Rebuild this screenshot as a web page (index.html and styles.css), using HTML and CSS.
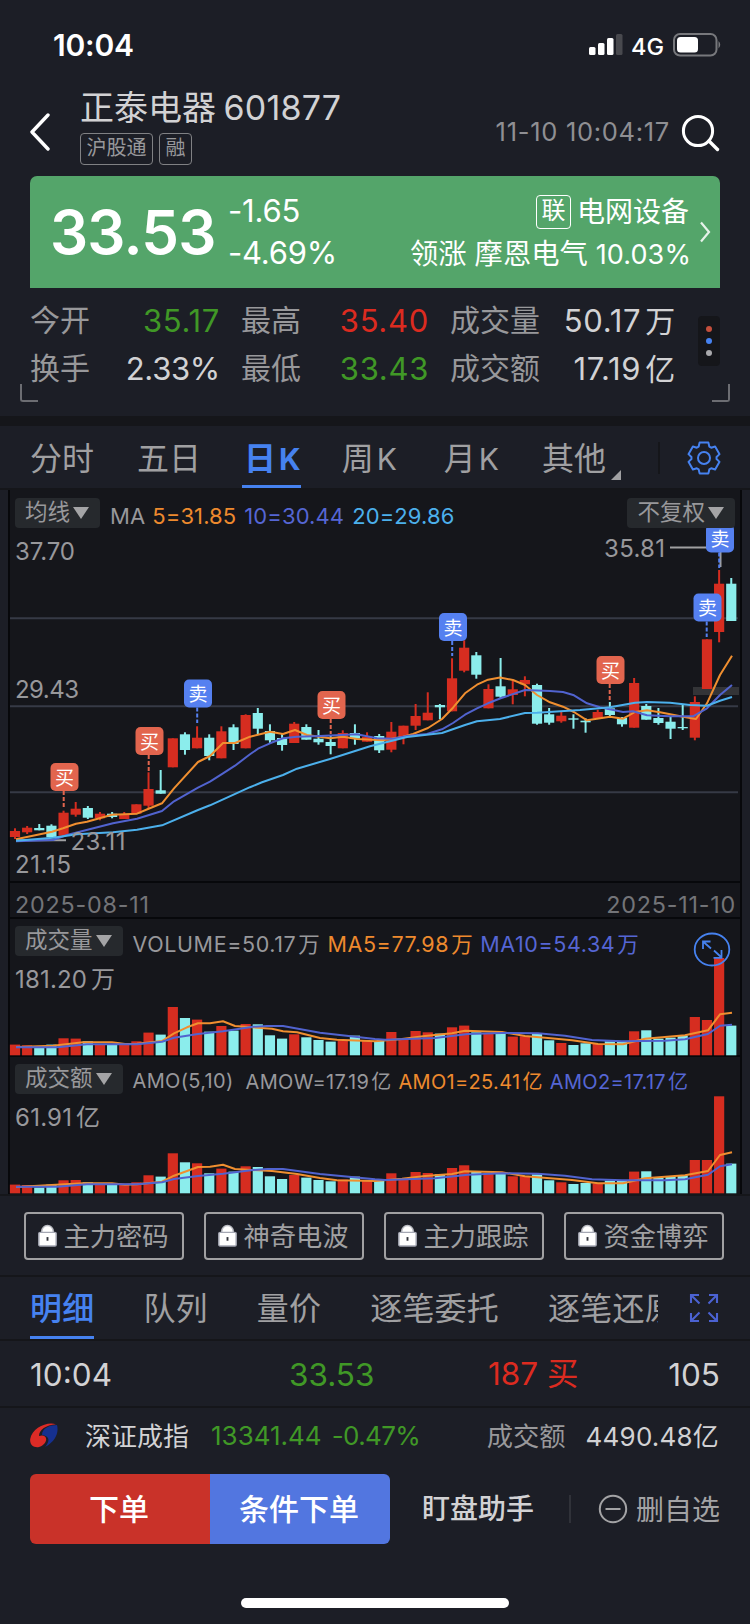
FILE: index.html
```html
<!DOCTYPE html>
<html lang="zh-CN">
<head>
  <meta charset="UTF-8">
  <title>正泰电器 601877</title>
  <meta name="viewport" content="width=device-width, initial-scale=1.0">
  <link rel="stylesheet" href="styles.css">
</head>
<body>
  <div class="status-bar">
    <span class="clock">10:04</span>
    <div class="status-right">
      <svg class="signal" width="34" height="22" viewBox="0 0 34 22">
        <rect x="0" y="13" width="6.5" height="8" rx="1.5" fill="#fff"/>
        <rect x="9" y="9" width="6.5" height="12" rx="1.5" fill="#fff"/>
        <rect x="18" y="4" width="6.5" height="17" rx="1.5" fill="#fff"/>
        <rect x="27" y="0" width="6.5" height="21" rx="1.5" fill="#48494e"/>
      </svg>
      <span class="network">4G</span>
      <svg class="battery" width="49" height="24" viewBox="0 0 49 24">
        <rect x="1" y="1" width="42.5" height="21.5" rx="6" fill="none" stroke="#77787c" stroke-width="2"/>
        <rect x="4" y="4" width="21" height="15.5" rx="3.5" fill="#fff"/>
        <path d="M45.5 8 q3.5 3.7 0 7.5z" fill="#77787c"/>
      </svg>
    </div>
  </div>

  <header class="stock-header">
    <svg class="back" width="22" height="38" viewBox="0 0 22 38"><path d="M19 2 L3 19 L19 36" fill="none" stroke="#fff" stroke-width="3.4" stroke-linecap="round" stroke-linejoin="round"/></svg>
    <div class="stock-name">
      <h1>正泰电器 <span>601877</span></h1>
      <div class="tags"><span>沪股通</span><span>融</span></div>
    </div>
    <span class="quote-time">11-10 10:04:17</span>
    <svg class="search" width="40" height="38" viewBox="0 0 40 38"><circle cx="17" cy="17" r="14.6" fill="none" stroke="#fff" stroke-width="3"/><path d="M28 27 L36.5 35.5" stroke="#fff" stroke-width="3.4" stroke-linecap="round"/></svg>
  </header>

  <section class="price-card">
    <strong class="price">33.53</strong>
    <div class="change"><span>-1.65</span><span>-4.69%</span></div>
    <div class="sector">
      <div class="sector-name"><i>联</i>电网设备</div>
      <div>领涨 摩恩电气 <span>10.03%</span></div>
    </div>
    <svg width="12" height="24" viewBox="0 0 12 24"><path d="M2 2.5 L10 12 L2 21.5" fill="none" stroke="#fff" stroke-opacity=".85" stroke-width="2.2"/></svg>
  </section>

  <section class="stats">
    <div class="stats-grid">
      <span>今开</span><b class="green">35.17</b><span>最高</span><b class="red">35.40</b><span>成交量</span><b>50.17<em>万</em></b>
      <span>换手</span><b class="turnover">2.33%</b><span>最低</span><b class="green">33.43</b><span>成交额</span><b>17.19<em>亿</em></b>
    </div>
    <div class="dots"><i></i><i></i><i></i></div>
    <div class="corner left"></div>
    <div class="corner right"></div>
  </section>

  <nav class="period-tabs">
    <span>分时</span>
    <span class="five-day">五日</span>
    <span class="active">日<em>K</em></span>
    <span class="week">周<em>K</em></span>
    <span>月<em>K</em></span>
    <span class="more">其他</span>
    <div class="settings">
      <svg width="34" height="34" viewBox="-17 -17 34 34">
        <path id="gearPath" fill="none" stroke="#4682f0" stroke-width="2" stroke-linejoin="round"/>
        <circle r="6" fill="none" stroke="#4682f0" stroke-width="2"/>
      </svg>
    </div>
  </nav>

  <section class="charts">
    <div class="pane kline">
      <svg id="kline" width="734" height="392" viewBox="8 490 734 392"></svg>
      <div class="legend">
        <span class="chip">均线<i></i></span>
        <span>MA</span><span class="ma5">5=31.85</span><span class="ma10">10=30.44</span><span class="ma20">20=29.86</span>
        <span class="chip adjust">不复权<i></i></span>
      </div>
    </div>
    <div class="dates"><span>2025-08-11</span><span>2025-11-10</span></div>
    <div class="pane volume">
      <svg id="volume" width="734" height="138" viewBox="8 919 734 138"></svg>
      <div class="legend">
        <span class="chip">成交量<i></i></span>
        <span>VOLUME=50.17<em>万</em></span><span class="ma5">MA5=77.98<em>万</em></span><span class="ma10">MA10=54.34<em>万</em></span>
      </div>
    </div>
    <div class="pane amount">
      <svg id="amount" width="734" height="137" viewBox="8 1057 734 137"></svg>
      <div class="legend">
        <span class="chip">成交额<i></i></span>
        <span class="amo">AMO(5,10)</span><span>AMOW=17.19<em>亿</em></span><span class="ma5">AMO1=25.41<em>亿</em></span><span class="ma10">AMO2=17.17<em>亿</em></span>
      </div>
    </div>
  </section>

  <svg width="0" height="0" class="defs">
    <symbol id="lock" viewBox="0 0 18 22">
      <path d="M3.5 10 V7 a5.5 5.5 0 0 1 11 0 V10z" fill="#fff" stroke="#b9bbc2" stroke-width="1.4"/>
      <rect x="0.7" y="8" width="16.6" height="13" rx="1.2" fill="#fff" stroke="#a4a7b3" stroke-width="1.4"/>
      <path d="M9 12.5 V16" stroke="#33353c" stroke-width="1.8"/>
    </symbol>
  </svg>
  <div class="tools">
    <button><svg width="19" height="23"><use href="#lock"/></svg>主力密码</button>
    <button><svg width="19" height="23"><use href="#lock"/></svg>神奇电波</button>
    <button><svg width="19" height="23"><use href="#lock"/></svg>主力跟踪</button>
    <button><svg width="19" height="23"><use href="#lock"/></svg>资金博弈</button>
  </div>

  <nav class="detail-tabs">
    <div class="detail-scroll">
      <span class="active">明细</span>
      <span>队列</span>
      <span>量价</span>
      <span>逐笔委托</span>
      <span>逐笔还原</span>
    </div>
    <svg width="30" height="30" viewBox="0 0 30 30" fill="none" stroke="#4b62d2" stroke-width="2.1">
      <path d="M10 2 H2 V10 M2 2 L10.500 10.500 M20 2 H28 V10 M28 2 L19.500 10.500 M10 28 H2 V20 M2 28 L10.500 19.500 M20 28 H28 V20 M28 28 L19.500 19.500"/>
    </svg>
  </nav>

  <div class="trade-row">
    <span>10:04</span><span class="green">33.53</span><span class="red">187 买</span><span>105</span>
  </div>

  <div class="index-row">
    <svg width="28" height="25" viewBox="0 0 28 25">
      <path d="M27 2 C29 9 26 18 15 24 C20 18 20 13 12 12 C12 5 20 2 27 2z" fill="#16308f"/>
      <path d="M26 1.200 C17 -2 2 5 0.200 16 C-0.500 22 4 25 9 24 C15 22.500 18 16 15 13.500 C13 12 11 12.500 9 13 C9 7 16 1.800 26 1.200z" fill="#dc2b26"/>
    </svg>
    <span class="index-name">深证成指</span>
    <span class="index-price green">13341.44</span>
    <span class="index-change green">-0.47%</span>
    <span class="index-label">成交额</span>
    <span class="index-amount">4490.48<em>亿</em></span>
  </div>

  <footer class="actions">
    <button class="order">下单</button>
    <button class="cond-order">条件下单</button>
    <span class="watch">盯盘助手</span>
    <span class="remove"><svg width="30" height="30" viewBox="0 0 30 30" fill="none" stroke="#a3a3a5" stroke-width="2"><circle cx="15" cy="15" r="13.200"/><path d="M7.500 15 H22.500"/></svg><span>删自选</span></span>
  </footer>
  <div class="home-bar"></div>

  <script src="chart.js"></script>
</body>
</html>
```

FILE: styles.css
```css
* {
  box-sizing: border-box;
}
body {
  width: 750px;
  height: 1624px;
  margin: 0;
  overflow: hidden;
  font-family: Inter, 'Noto Sans CJK SC', sans-serif;
  color: #d2d2d4;
  background: #1c1e26;
  display: flex;
  flex-direction: column;
}
svg {
  display: block;
  flex: none;
}
em, i {
  font-style: normal;
}
span, button, b, strong {
  white-space: nowrap;
}
button {
  font-family: inherit;
  padding: 0;
}
.green {
  color: #409826;
}
.red {
  color: #dc2b20;
}
.defs {
  position: absolute;
}

/* status bar */
.status-bar {
  height: 90px;
  padding: 0 28px 0 53px;
  display: flex;
  align-items: center;
  justify-content: space-between;
  color: #fff;
}
.clock {
  font-size: 30px;
  font-weight: 600;
  letter-spacing: -0.2px;
}
.status-right {
  display: flex;
  align-items: center;
}
.network {
  font-size: 23.5px;
  font-weight: 500;
  margin: 2px 9px 0 8px;
}

/* header */
.stock-header {
  height: 86px;
  padding: 0 30px 0 29px;
  display: flex;
  align-items: center;
}
.back {
  margin: -2px 29px 0 0;
}
.stock-name {
  flex: 1;
  padding-bottom: 11px;
}
h1 {
  margin: 0;
  font-size: 34px;
  font-weight: 400;
  line-height: 36px;
  letter-spacing: 0;
}
h1 span {
  letter-spacing: 0.2px;
  margin-left: -2px;
}
.tags {
  display: flex;
  gap: 6px;
  margin-top: 7px;
  color: #98989b;
  font-size: 20px;
}
.tags span {
  height: 32px;
  line-height: 29px;
  padding: 0 5.500px;
  border: 1.5px solid #808184;
  border-radius: 4px;
}
.quote-time {
  margin-top: -3px;
  color: #8f8f93;
  font-size: 25.5px;
  letter-spacing: 0.7px;
}
.search {
  margin-left: 11px;
  margin-right: -1px;
  margin-top: -1px;
}

/* price */
.price-card {
  height: 112px;
  margin: 0 30px;
  padding: 0 9px 0 20px;
  display: flex;
  align-items: center;
  border-radius: 7px 7px 0 0;
  background: #54a56a;
  color: #fff;
}
.price {
  width: 178px;
  font-size: 60px;
  font-weight: 600;
  letter-spacing: -0.8px;
}
.change {
  display: flex;
  flex-direction: column;
  font-size: 31px;
  line-height: 42px;
  letter-spacing: -0.2px;
}
.sector {
  flex: 1;
  text-align: right;
  font-size: 28.300px;
  line-height: 42px;
  margin-right: 8px;
  padding-top: 2px;
}
.sector-name {
  display: flex;
  justify-content: flex-end;
  align-items: center;
  gap: 6px;
  font-size: 28px;
  margin-right: 2px;
}
.sector-name i {
  width: 35px;
  height: 34px;
  border: 1.5px solid #fff;
  border-radius: 4px;
  font-size: 24px;
  line-height: 30px;
  text-align: center;
}
.sector span {
  font-size: 27px;
  letter-spacing: 0.1px;
}

/* stats */
.stats {
  position: relative;
  height: 128px;
  padding: 9px 30px 0;
  display: flex;
  justify-content: space-between;
}
.stats-grid {
  display: grid;
  grid-template-columns: 80px 110px 110px 99px 120px 127px;
  grid-auto-rows: 48px;
  align-items: center;
  font-size: 30px;
}
.stats-grid span {
  color: #98989b;
  line-height: 42px;
  padding-bottom: 2px;
}
.stats-grid b {
  font-weight: 400;
  font-size: 31px;
  line-height: 42px;
  letter-spacing: 0.7px;
  text-align: right;
}
.stats-grid .turnover {
  letter-spacing: -0.3px;
}
.stats-grid span:nth-child(6n + 3), .stats-grid span:nth-child(6n + 5) {
  padding-left: 21px;
}
.stats-grid em {
  margin-left: 4px;
  font-size: 30px;
}
.dots {
  width: 22px;
  height: 50px;
  margin-top: 19px;
  border-radius: 4px;
  background: #15161a;
  display: flex;
  flex-direction: column;
  align-items: center;
  justify-content: center;
  gap: 6px;
}
.dots i {
  width: 6px;
  height: 6px;
  border-radius: 50%;
  background: #c44f3c;
}
.dots i:nth-child(2) {
  background: #4682f0;
}
.dots i:nth-child(3) {
  background: #a9a9ac;
}
.corner {
  position: absolute;
  bottom: 14px;
  width: 18px;
  height: 18px;
  border-bottom: 2px solid #6c6d72;
}
.corner.left {
  left: 20px;
  border-left: 2px solid #6c6d72;
  border-bottom-left-radius: 3px;
}
.corner.right {
  right: 20px;
  border-right: 2px solid #6c6d72;
  border-bottom-right-radius: 3px;
}

/* period tabs */
.period-tabs {
  height: 74px;
  border-top: 10px solid #15161a;
  border-bottom: 2px solid #15161a;
  padding: 0 29px 0 30px;
  display: flex;
  font-size: 32px;
  line-height: 65px;
  color: #a0a0a2;
}
.period-tabs span {
  height: 62px;
  margin-right: 43px;
}
.period-tabs em {
  margin-left: 3px;
  font-size: 30px;
}
.period-tabs .five-day {
  margin-right: 41px;
}
.period-tabs .active {
  color: #4682f0;
  font-weight: 700;
  border-bottom: 3px solid #4682f0;
  padding-left: 2px;
  margin-right: 41px;
}
.period-tabs .week {
  margin-right: 47px;
}
.more {
  position: relative;
}
.more::after {
  content: "";
  position: absolute;
  left: 69px;
  top: 44px;
  border-left: 10px solid transparent;
  border-bottom: 10px solid #a0a0a2;
}
.settings {
  width: 63px;
  height: 32px;
  margin: 16px 0 0 auto;
  display: flex;
  align-items: center;
  justify-content: flex-end;
  border-left: 2px solid #15161a;
}

/* charts */
.charts {
  width: 734px;
  height: 704px;
  margin-left: 8px;
  background: #15161b;
  border-left: 2px solid #07080b;
  border-right: 2px solid #07080b;
}
.pane {
  position: relative;
  border-bottom: 2px solid #07080b;
}
.pane > svg {
  position: absolute;
  left: -2px;
  top: 0;
}
.kline {
  height: 393px;
}
.volume {
  height: 138px;
}
.amount {
  height: 137px;
  border-bottom: 0;
}
.legend {
  position: relative;
  display: flex;
  align-items: center;
  height: 30px;
  padding: 0 5px;
  font-size: 22px;
  color: #98989b;
}
.kline .legend {
  top: 8px;
  letter-spacing: 0.1px;
}
.volume .legend, .amount .legend {
  top: 7px;
}
.legend > span + span {
  padding-top: 3px;
  margin-left: 7px;
}
.legend .chip + span {
  margin-left: 10px;
}
.kline .legend > span {
  padding-top: 5px;
}
.kline .legend .ma10, .kline .legend .ma20 {
  margin-left: 8px;
}
.legend em {
  margin-left: 2px;
}
.legend .chip {
  height: 30px;
  line-height: 28px;
  padding: 0 11px 0 10px;
  border-radius: 4px;
  background: #26292d;
  font-size: 22.5px;
  letter-spacing: 0;
}
.kline .legend .chip {
  padding-top: 0;
}
.chip i {
  display: inline-block;
  margin-left: 3px;
  vertical-align: 1px;
  border: 8px solid transparent;
  border-top: 12px solid #a4a4a6;
  border-bottom: 0;
}
.legend .adjust {
  margin-left: auto;
}
.legend .ma5 {
  color: #ee8a2e;
}
.legend .ma10 {
  color: #5566d4;
}
.legend .ma20 {
  color: #4cb0ec;
}
.volume .legend {
  font-size: 21.5px;
  letter-spacing: 0.6px;
}
.amount .legend {
  font-size: 20px;
  letter-spacing: 0.32px;
}
.legend .amo {
  margin-right: 5px;
}
.dates {
  height: 36px;
  padding: 8px 4px 0 5px;
  display: flex;
  align-items: center;
  justify-content: space-between;
  border-bottom: 2px solid #07080b;
  color: #737478;
  font-size: 23.300px;
  letter-spacing: 0.8px;
}
svg text {
  font-family: Inter, 'Noto Sans CJK SC', sans-serif;
}

/* locked tools */
.tools {
  height: 83px;
  padding: 16px 26px 0 24px;
  display: flex;
  justify-content: space-between;
  border-top: 2px solid #15161a;
  border-bottom: 2px solid #15161a;
}
.tools button {
  width: 160px;
  height: 48px;
  padding: 0 2px 3px 1px;
  display: flex;
  align-items: center;
  justify-content: center;
  gap: 6px;
  border: 2px solid #a0a0a2;
  border-radius: 4px;
  background: none;
  color: #a0a0a2;
  font-size: 26.300px;
}
.tools svg {
  margin-top: 2px;
}

/* detail tabs */
.detail-tabs {
  height: 64px;
  padding: 0 31px 0 30px;
  display: flex;
  align-items: center;
  justify-content: space-between;
  border-bottom: 2px solid #15161a;
}
.detail-scroll {
  width: 628px;
  height: 62px;
  overflow: hidden;
  display: flex;
  gap: 49px;
  font-size: 32px;
  letter-spacing: 0.2px;
  line-height: 64px;
  color: #a0a0a2;
}
.detail-scroll .active {
  height: 62px;
  color: #4682f0;
  font-weight: 500;
  border-bottom: 3px solid #4682f0;
}

/* last trade */
.trade-row {
  height: 67px;
  padding: 2px 30px 0;
  display: grid;
  grid-template-columns: 259px 199px 148px 1fr;
  align-items: center;
  border-bottom: 2px solid #15161a;
  font-size: 31.500px;
}
.trade-row span {
  line-height: 44px;
}
.trade-row .red {
  padding-bottom: 1px;
}
.trade-row span:last-child {
  text-align: right;
}

/* index */
.index-row {
  height: 57px;
  padding: 0 31px 2px 30px;
  display: flex;
  align-items: center;
  font-size: 26px;
}
.index-name {
  margin: 0 22px 0 27px;
  padding-bottom: 2px;
}
.index-price {
  margin-right: 10px;
}
.index-change {
  letter-spacing: -0.6px;
}
.index-label {
  margin: 0 20px 0 auto;
  padding-bottom: 2px;
  font-size: 26.300px;
  color: #98989b;
}
.index-amount {
  padding-bottom: 2px;
  letter-spacing: 0.2px;
}

/* actions */
.actions {
  height: 70px;
  margin: 9px 30px 0;
  display: flex;
  align-items: center;
  font-size: 28px;
}
.actions button {
  width: 180px;
  height: 70px;
  border: 0;
  padding: 0 2px 5px 0;
  color: #fff;
  font-size: 30px;
  font-weight: 500;
}
.order {
  border-radius: 6px 0 0 6px;
  background: #c93229;
}
.cond-order {
  border-radius: 0 6px 6px 0;
  background: #5276e0;
}
.watch {
  width: 181px;
  padding-left: 32px;
  font-weight: 500;
  border-right: 2px solid #303239;
  line-height: 28px;
}
.remove {
  display: flex;
  align-items: center;
  margin-left: auto;
  gap: 8px;
  color: #a3a3a5;
}
.remove span {
  padding-bottom: 3px;
}
.home-bar {
  width: 268px;
  height: 10px;
  margin: 54px auto 0;
  border-radius: 5px;
  background: #fff;
}
```

FILE: chart.js
```javascript
const RED = '#d62d20';
const CYAN = '#8bedec';
const GREY = '#98989b';
const STEP = 12.14;
const X0 = 15;

// [up, body top, body bottom, wick top, wick bottom]
const candles = [
  [1,831,837,828.3,839], [1,827.7,832.3,826,834], [0,828,830.3,824,830.3], [0,825.7,837.3,824.3,837.3],
  [1,812.7,835.7,810.7,835.7], [1,808.7,814.7,802,816.7], [0,808,817.7,806,819], [1,813.7,818.3,812,820.3],
  [0,813.7,817,812,818.3], [1,814,819,812,819], [1,804.3,813.7,804.3,813.7], [1,789,805.7,772.3,808.3],
  [0,790.3,793.7,770,793.7], [1,738.3,767.3,738.3,767.3], [0,734.3,750,732.3,754.7], [1,737.7,748.3,726.3,748.3],
  [0,737.7,756,734.3,760.3], [1,731.3,758.3,726.3,758.3], [0,727.3,744,724.3,750], [1,715,748.3,714.3,748.3],
  [0,713,728.7,708,734.3], [0,731,740.3,724.3,743.3], [0,738,745,734,750.7], [1,723.7,743,722,743],
  [0,727,739.7,724.3,739.7], [0,738.7,742.3,730,744.7], [0,742,746,735.3,754.3], [1,733,748.3,730.3,748.3],
  [0,733,738.7,724.3,744.7], [1,736.7,741.7,732.3,741.7], [0,736,750.3,734,753], [1,731.7,749.7,722,752.3],
  [1,725.7,737,725.7,744.3], [1,716,725.7,704,730], [1,712.7,720.3,692.3,720.3], [0,705,707.3,704,719.3],
  [1,678.3,711.3,658.3,711.3], [1,647.7,670.7,640.3,672.3], [0,655.3,674.7,652,678.7], [1,689,708.3,684.3,708.3],
  [0,686.3,696.7,658,698], [1,689.3,695,680.3,704.3], [1,680,684.3,676.3,696.3], [0,685,723.7,683.7,724.7],
  [0,714.3,722.7,708,724.7], [1,715.7,721.3,712,722.7], [0,718.3,719.7,714.3,728.7], [0,720.7,722.3,718.3,732.7],
  [1,712,718.3,709.7,718.3], [0,708.3,715,702,716.7], [0,718,724.3,717,726.7], [1,683,727.7,678,727.7],
  [0,706,719.7,704,719.7], [0,718,723,708,724.7], [0,721.7,728.7,716.3,739], [0,727,728.3,704,730],
  [1,702,737.7,696.3,740.3], [1,639.3,689,639.3,689], [1,583.7,632,570,642.3], [0,583.7,621,578,621]
];

const volumes = [
  10.7,10,8.7,10.7,17,16.7,14,11.3,10.7,10.7,14,22.7,20.7,48.3,37.3,35.7,23.7,29.3,24.7,31.3,
  31,20,16.7,21,18,15.3,13.7,15,19.7,14.3,14.3,23.3,16,24.3,23,21.7,28,29.7,23,21.3,
  22,18.7,19,21.7,15,12.3,10.3,12,11.3,14,13.3,24,25,16.7,17.7,19.7,38.3,35.3,97.3,29.7
];

const amounts = [
  8.7,8.3,5.7,8.7,13,13.3,11,9,8.7,9,11,18,16.7,40,31,30,20,24.7,21.7,27,
  26.3,17,14.3,18.3,15.7,13.3,12,13.7,16.7,13,13,20,13.7,21.3,20.3,19,25.3,28,21.3,20,
  20,17,17,19,13,11,9.3,10.3,9.7,12.7,12.3,21.7,22,16,16.7,18,33.3,33.3,97,29.7
];

const signals = [
  ['买', 64.5, 777, 807], ['买', 149.5, 741, 771], ['卖', 198, 693.5, 723], ['买', 331.5, 705, 734],
  ['卖', 453, 627, 656], ['买', 610.5, 670, 700], ['卖', 720, 538.5, 568], ['卖', 707.5, 607.5, 637]
];

const rect = (x, y, w, h, fill, rx = 0) => `<rect x="${x}" y="${y}" width="${w}" height="${h}" fill="${fill}" rx="${rx}"/>`;
const line = (points, color, width = 2) => `<polyline points="${points}" fill="none" stroke="${color}" stroke-width="${width}" stroke-linejoin="round"/>`;
const label = (str, x, y, width, size = 24) => `<text x="${x}" y="${y}" font-size="${size}" fill="${GREY}" textLength="${width}">${str}</text>`;

function drawKline() {
  let out = '';
  [618.3, 706.3, 792.3].forEach(y => {
    out += line(`10,${y} 738,${y}`, '#363a46');
  });
  out += rect(693, 687, 46, 8, '#333437');
  candles.forEach(([up, top, bottom, high, low], i) => {
    const x = X0 + i * STEP;
    const color = up ? RED : CYAN;
    out += rect(x - 1, high, 2, low - high, color) + rect(x - 5.1, top, 10.2, bottom - top, color);
  });
  out += line('16,840.3 66,840.3', '#a0a0a2');
  out += line('16,839.3 52,831.7 63,828.3 76,823.7 87,821.7 112,814.7 137,813.7 148,809 162,803.3 174,788.3 198,762 210,756 223,743 235,743 250,736.7 270,731.7 283,734 295,730 307,735 330,738.3 343,736.7 357,739 383,740.3 403,736.7 413,734 428,728 442,719 453,707.7 465,693.3 477,684.7 488,679.7 500,677.5 513,680 525,685 537,695 550,702.3 563,706.7 574,712 587,720.3 610,716.7 623,718.7 635,712 647,710.3 660,712.3 683,716.7 696,719 707,703.3 720,675 732,655.7', '#f08f30');
  out += line('16,841.3 53,840 67,835 113,823.3 137,818.7 162,811 174,801.3 198,787.7 210,781.7 223,773.3 235,765.7 250,754.3 258,748.7 270,743.3 283,738.3 297,736.7 320,736 357,734.3 377,738.3 393,738.7 407,736 427,734 442,729.3 453,723 465,714.7 477,708.3 488,703.3 500,698.5 525,690 550,691 563,692 574,695.3 587,703.3 600,707.3 623,712 633,711.3 647,715.3 670,716.3 693,716.3 707,708.3 720,695 732,685', '#5163cf');
  out += line('16,840.7 53,837.7 77,834.3 113,832.3 137,829.7 162,825.3 198,810 210,805.3 250,787.2 262,782.3 283,775 297,768.7 330,759 370,746.3 407,737 442,733 465,725 477,721.3 500,719 525,713 537,712.7 580,710 610,707.3 635,702.7 647,702 670,702.7 690,705 707,705.7 720,700.7 732,697', '#4cb0ec');
  out += label('37.70', 15, 559.5, 60) + label('29.43', 15, 697.5, 64) + label('21.15', 15, 872.5, 56);
  out += label('35.81', 604, 557, 61) + label('23.11', 70.5, 849.5, 55);
  out += line('670,547.5 720.5,547.5 720.5,567', '#a0a0a2');
  signals.forEach(([name, x, y, end]) => {
    const color = name === '买' ? '#e2654e' : '#5580f0';
    out += `<path d="M${x - 0.8} ${y + 14} V${end}" stroke="${color}" stroke-width="2" stroke-dasharray="4 2"/>`;
    out += rect(x - 14, y - 14, 28, 28, color, 5);
    out += `<text x="${x}" y="${y + 7.5}" font-size="19" fill="#fff" text-anchor="middle">${name}</text>`;
  });
  document.getElementById('kline').innerHTML = out;
}

function bars(values, base) {
  return values.map((v, i) => rect(X0 + i * STEP - 5.1, base - v, 10.2, v, candles[i][0] ? RED : CYAN)).join('');
}

function drawVolume() {
  let out = bars(volumes, 1055.3);
  out += line('16,1047 53,1045.7 83,1042.3 112,1042.3 125,1044 137,1043.7 162,1041 174,1033.3 187,1027.3 198,1023.3 210,1023.3 223,1021.3 235,1026 272,1028.7 283,1031.3 297,1032.3 320,1038 337,1039.7 375,1041.2 402,1039 425,1036 452,1033.3 465,1030.7 502,1032 525,1036 548,1038 572,1040.3 598,1044 623,1044.3 645,1038.7 685,1035.3 708,1030.3 720,1014.3 732,1012.7', '#f08f30');
  out += line('16,1047.3 57,1047.3 87,1044.3 137,1044.3 162,1041.7 174,1037.7 198,1034 223,1031.3 253,1026.7 267,1026 283,1026 320,1032.7 375,1039 385,1039.7 435,1038 468,1034 502,1033 538,1033.3 565,1035.7 592,1040 622,1041.3 665,1040.7 685,1039.3 708,1034 720,1025.7 732,1024.7', '#5163cf');
  out += label('181.20', 15, 987.5, 72) + label('万', 91, 987.5, 23);
  out += '<g fill="none" stroke="#4682f0" stroke-width="1.8"><ellipse cx="712" cy="949.5" rx="17.3" ry="16"/><path d="M703 949 V941.500 H710.500 M703.500 942 L711 948.500 M714 950.500 L721 957 M713.500 957.800 H721.500 V950"/></g>';
  document.getElementById('volume').innerHTML = out;
}

function drawAmount() {
  let out = bars(amounts, 1193.3);
  out += line('16,1187 83,1183.3 112,1183.3 125,1184.7 137,1184.3 162,1181.7 174,1175.7 187,1171 198,1167 210,1166.7 223,1164.7 235,1169 272,1171 297,1174 320,1178 337,1180.3 375,1181 402,1178.7 425,1176 452,1174 465,1171.3 502,1172.3 525,1176.3 572,1180 598,1183.3 623,1183.3 645,1178.3 685,1175.3 708,1171 720,1155 732,1152.3', '#f08f30');
  out += line('16,1186.7 57,1186.7 87,1184.3 137,1184.3 162,1182.3 174,1179 198,1176 223,1173.7 253,1170 267,1169 283,1169 320,1174 375,1179.3 385,1180 435,1178.3 468,1174.7 502,1173.3 538,1173.7 565,1175.7 592,1179.3 622,1180.3 665,1180.3 685,1179.3 708,1174.7 720,1166.3 732,1164.3', '#5163cf');
  out += label('61.91', 15, 1125.5, 57) + label('亿', 76, 1125.5, 24);
  document.getElementById('amount').innerHTML = out;
}

// six-tooth outline of the settings gear
function drawGear() {
  let d = '';
  for (let i = 0; i < 6; i++) {
    [[-25, 12.6], [-16, 16], [16, 16], [25, 12.6]].forEach(([deg, r]) => {
      const a = (i * 60 - 90 + deg) * Math.PI / 180;
      d += `${d ? 'L' : 'M'}${(r * Math.cos(a)).toFixed(2)} ${(r * Math.sin(a)).toFixed(2)}`;
    });
  }
  document.getElementById('gearPath').setAttribute('d', d + 'z');
}

drawKline();
drawVolume();
drawAmount();
drawGear();
```
